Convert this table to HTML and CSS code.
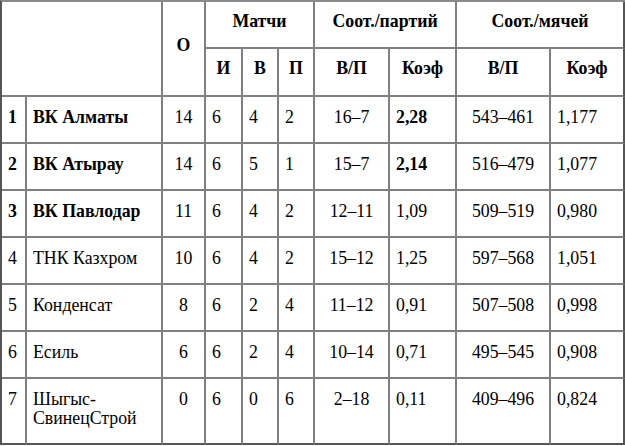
FILE: index.html
```html
<!DOCTYPE html>
<html>
<head>
<meta charset="utf-8">
<title>Таблица</title>
<link rel="stylesheet" href="styles.css">
</head>
<body>
<table class="standings">
  <colgroup>
    <col class="c-pos"><col class="c-team"><col class="c-pts">
    <col class="c-m"><col class="c-m2"><col class="c-m2">
    <col class="c-wl"><col class="c-k"><col class="c-wl2"><col class="c-k2">
  </colgroup>
  <thead>
    <tr class="h1">
      <th colspan="2" rowspan="2"></th>
      <th rowspan="2">О</th>
      <th colspan="3">Матчи</th>
      <th colspan="2">Соот./партий</th>
      <th colspan="2">Соот./мячей</th>
    </tr>
    <tr class="h2">
      <th>И</th><th>В</th><th>П</th>
      <th>В/П</th><th>Коэф</th>
      <th>В/П</th><th>Коэф</th>
    </tr>
  </thead>
  <tbody>
    <tr>
      <td class="b">1</td><td class="b">ВК Алматы</td><td class="ctr">14</td>
      <td>6</td><td>4</td><td>2</td>
      <td class="ctr">16–7</td><td class="b">2,28</td><td class="ctr">543–461</td><td>1,177</td>
    </tr>
    <tr>
      <td class="b">2</td><td class="b">ВК Атырау</td><td class="ctr">14</td>
      <td>6</td><td>5</td><td>1</td>
      <td class="ctr">15–7</td><td class="b">2,14</td><td class="ctr">516–479</td><td>1,077</td>
    </tr>
    <tr>
      <td class="b">3</td><td class="b">ВК Павлодар</td><td class="ctr">11</td>
      <td>6</td><td>4</td><td>2</td>
      <td class="ctr">12–11</td><td>1,09</td><td class="ctr">509–519</td><td>0,980</td>
    </tr>
    <tr>
      <td>4</td><td>ТНК Казхром</td><td class="ctr">10</td>
      <td>6</td><td>4</td><td>2</td>
      <td class="ctr">15–12</td><td>1,25</td><td class="ctr">597–568</td><td>1,051</td>
    </tr>
    <tr>
      <td>5</td><td>Конденсат</td><td class="ctr">8</td>
      <td>6</td><td>2</td><td>4</td>
      <td class="ctr">11–12</td><td>0,91</td><td class="ctr">507–508</td><td>0,998</td>
    </tr>
    <tr>
      <td>6</td><td>Есиль</td><td class="ctr">6</td>
      <td>6</td><td>2</td><td>4</td>
      <td class="ctr">10–14</td><td>0,71</td><td class="ctr">495–545</td><td>0,908</td>
    </tr>
    <tr>
      <td>7</td><td>Шыгыс-СвинецСтрой</td><td class="ctr">0</td>
      <td>6</td><td>0</td><td>6</td>
      <td class="ctr">2–18</td><td>0,11</td><td class="ctr">409–496</td><td>0,824</td>
    </tr>
  </tbody>
</table>
</body>
</html>
```
FILE: styles.css
```css
html, body {
  margin: 0;
  padding: 0;
  background: #ffffff;
}
body {
  font-family: "Liberation Serif", "Times New Roman", serif;
  font-size: 17.8px;
  color: #000000;
}
.standings {
  border-collapse: separate;
  border-spacing: 0;
  table-layout: fixed;
  width: 625px;
  border-top: 2px solid #8a8a8a;
  border-left: 2px solid #555555;
}
.c-pos { width: 25px; }
.c-team { width: 136px; }
.c-pts { width: 43px; }
.c-m { width: 37px; }
.c-m2 { width: 36px; }
.c-wl { width: 75px; }
.c-k { width: 67px; }
.c-wl2 { width: 94px; }
.c-k2 { width: 74px; }

.standings th,
.standings td {
  font-family: "Liberation Serif", "Times New Roman", serif;
  border-right: 2px solid #808080;
  border-bottom: 2px solid #808080;
  line-height: 19px;
  padding: 11px 6px 15px 6px;
}
.standings th {
  font-weight: bold;
  text-align: center;
  vertical-align: middle;
}
.standings .h1 th { height: 19px; padding-top: 10px; padding-bottom: 16px; }
.standings .h2 th { height: 19px; padding-top: 10px; padding-bottom: 17px; }
.standings td {
  text-align: left;
  vertical-align: top;
}
.standings td.ctr { text-align: center; }
.standings td.b { font-weight: bold; }
.standings tr > :last-child { border-right-color: #555555; }
.standings tbody tr:last-child td { border-bottom-color: #555555; }
```
